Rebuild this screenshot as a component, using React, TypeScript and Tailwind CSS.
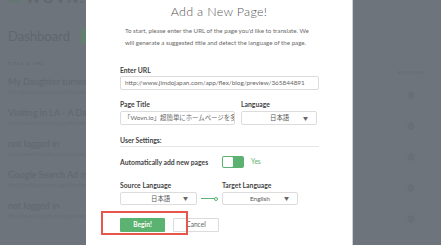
import React from "react";
import { Settings } from "lucide-react";

const rows = [
  { t: "My Daughter turned 3.", u: "http://jimdojapan.com/app/flex/blog/preview/365844891" },
  { t: "Visiting in LA - A Day In California", u: "http://www.jimdo.com/app/flex/blog/preview/123" },
  { t: "not logged in", u: "http://www10.jimdo.com/app/web/login" },
  { t: "Google Search Ad in India", u: "http://jimdojapan.com/app/flex/blog/preview/55" },
  { t: "not logged in", u: "http://www10.jimdo.com/app/web/login" },
];

function Chevron() {
  return <span className="text-[5px] text-[#666] leading-none">▼</span>;
}

export default function App() {
  return (
    <div
      className="relative w-[441px] h-[245px] overflow-hidden bg-[#6d747b]"
      style={{ fontFamily: "Lato, 'Noto Sans CJK JP', sans-serif" }}
    >
      {/* background page (dimmed) */}
      <div className="flex h-full">
        <div className="flex-1 pl-[8px]">
          <div className="flex items-center gap-[6px] -mt-[9px] h-[12px]">
            <div className="w-[12px] h-[12px] rounded-full border-[2px] border-[#5f7a6c]" />
            <span className="text-[14px] font-bold tracking-[2px] text-[#61686f]">WOVN.io</span>
          </div>
          <div className="flex items-center gap-[11px] mt-[26px] h-[15px]">
            <span className="text-[13px] leading-[15px] text-[#60676e]">Dashboard</span>
            <div className="w-[30px] h-[15px] bg-[#62806f]" />
          </div>
          <div className="mt-[17px] text-[4.5px] font-bold tracking-[1px] text-[#636a71] leading-[6px]">TITLE &amp; URL</div>
          <div className="mt-[9px] flex flex-col gap-[14px]">
            {rows.map((r, i) => (
              <div key={i} className="h-[17px] whitespace-nowrap">
                <div className="text-[9px] leading-[11px] text-[#61686f]">{r.t}</div>
                <div className="text-[5px] leading-[6px] text-[#676e75] mt-[2px]">{r.u}</div>
              </div>
            ))}
          </div>
        </div>
        <div className="w-[60px] flex flex-col items-center">
          <div className="mt-[70px] text-[4.5px] tracking-[1px] text-[#636a71] leading-[6px]">ACTIONS</div>
          <div className="mt-[15px] flex flex-col gap-[23px] items-center">
            {[0, 1, 2, 3, 4].map((i) => (
              <Settings key={i} size={8} color="#646b71" strokeWidth={2.5} />
            ))}
          </div>
        </div>
      </div>

      {/* modal */}
      <div className="absolute left-[86px] top-0 w-[267px] h-[245px] bg-white border-r border-[#cfd2d5] text-[#444]">
        <div className="pt-[5px] text-center text-[12.5px] leading-[14px] font-light text-[#555] tracking-[0.3px]">
          Add a New Page!
        </div>
        <div className="mt-[6px] pl-[39px] pr-[30px] text-[6.2px] leading-[12px] text-[#6a6a6a] whitespace-nowrap">
          <div>To start, please enter the URL of the page you'd like to translate. We</div>
          <div>will generate a suggested title and detect the language of the page.</div>
        </div>

        <div className="px-[34px]">
          <div className="mt-[16px] text-[6.8px] font-bold leading-[10px] text-[#444]">Enter URL</div>
          <div className="mt-[1px] w-[199px] h-[14px] border border-[#dcdcdc] rounded-[2px] flex items-center px-[4px] text-[6.4px] text-[#666] whitespace-nowrap overflow-hidden">
            http://www.jimdojapan.com/app/flex/blog/preview/365844891
          </div>

          <div className="mt-[9px] flex gap-[6px]">
            <div className="w-[115px]">
              <div className="text-[6.8px] font-bold leading-[10px] text-[#444]">Page Title</div>
              <div className="mt-[2px] h-[14px] border border-[#dcdcdc] rounded-[2px] flex items-center px-[3px] text-[6.4px] text-[#666] whitespace-nowrap overflow-hidden">
                「Wovn.io」超簡単にホームページを多言語化
              </div>
            </div>
            <div className="w-[76px]">
              <div className="text-[6.8px] font-bold leading-[10px] text-[#444]">Language</div>
              <div className="mt-[2px] h-[14px] border border-[#dcdcdc] rounded-[2px] flex items-center justify-between pl-[28px] pr-[8px] text-[6.4px] text-[#555]">
                <span>日本語</span>
                <Chevron />
              </div>
            </div>
          </div>

          <div className="mt-[10px] w-[199px] border-b border-[#e6e6e6] pb-[1px] text-[6.8px] font-bold leading-[10px] text-[#444]">
            User Settings:
          </div>

          <div className="mt-[9px] flex items-center h-[12px]">
            <div className="w-[102px] text-[6.8px] font-bold leading-[10px] text-[#444] whitespace-nowrap">
              Automatically add new pages
            </div>
            <div className="w-[22px] h-[12px] rounded-[2px] bg-[#5cb270] p-[1px] flex">
              <div className="w-[10px] h-[10px] bg-white rounded-[1px]" />
            </div>
            <span className="ml-[7px] text-[6.6px] text-[#5cb270]">Yes</span>
          </div>

          <div className="mt-[12px] flex items-end">
            <div className="w-[77px]">
              <div className="text-[6.8px] font-bold leading-[10px] text-[#444] whitespace-nowrap">Source Language</div>
              <div className="mt-[2px] h-[13px] border border-[#dcdcdc] rounded-[2px] flex items-center justify-between pl-[30px] pr-[8px] text-[6.4px] text-[#555]">
                <span>日本語</span>
                <Chevron />
              </div>
            </div>
            <div className="w-[25px] h-[13px] flex items-center pl-[4px]">
              <div className="w-[13px] h-[1.5px] bg-[#5cb270]" />
              <div className="w-[4px] h-[4px] rounded-full border border-[#5cb270] bg-white" />
            </div>
            <div className="w-[76px]">
              <div className="text-[6.8px] font-bold leading-[10px] text-[#444] whitespace-nowrap">Target Language</div>
              <div className="mt-[2px] h-[13px] border border-[#dcdcdc] rounded-[2px] flex items-center justify-between pl-[27px] pr-[8px] text-[6.4px] text-[#555]">
                <span>English</span>
                <Chevron />
              </div>
            </div>
          </div>

          <div className="mt-[13px] flex gap-[8px]">
            <div className="w-[45px] h-[14px] bg-[#5cb270] rounded-[1px] flex items-center justify-center text-[6.6px] font-bold text-white">
              Begin!
            </div>
            <div className="w-[46px] h-[14px] border border-[#dcdcdc] rounded-[1px] flex items-center justify-center text-[6.6px] text-[#666]">
              Cancel
            </div>
          </div>
        </div>

        <div className="absolute left-[15px] top-[211px] w-[87px] h-[24px] border-[2px] border-[#e8574f]" />
      </div>
    </div>
  );
}
